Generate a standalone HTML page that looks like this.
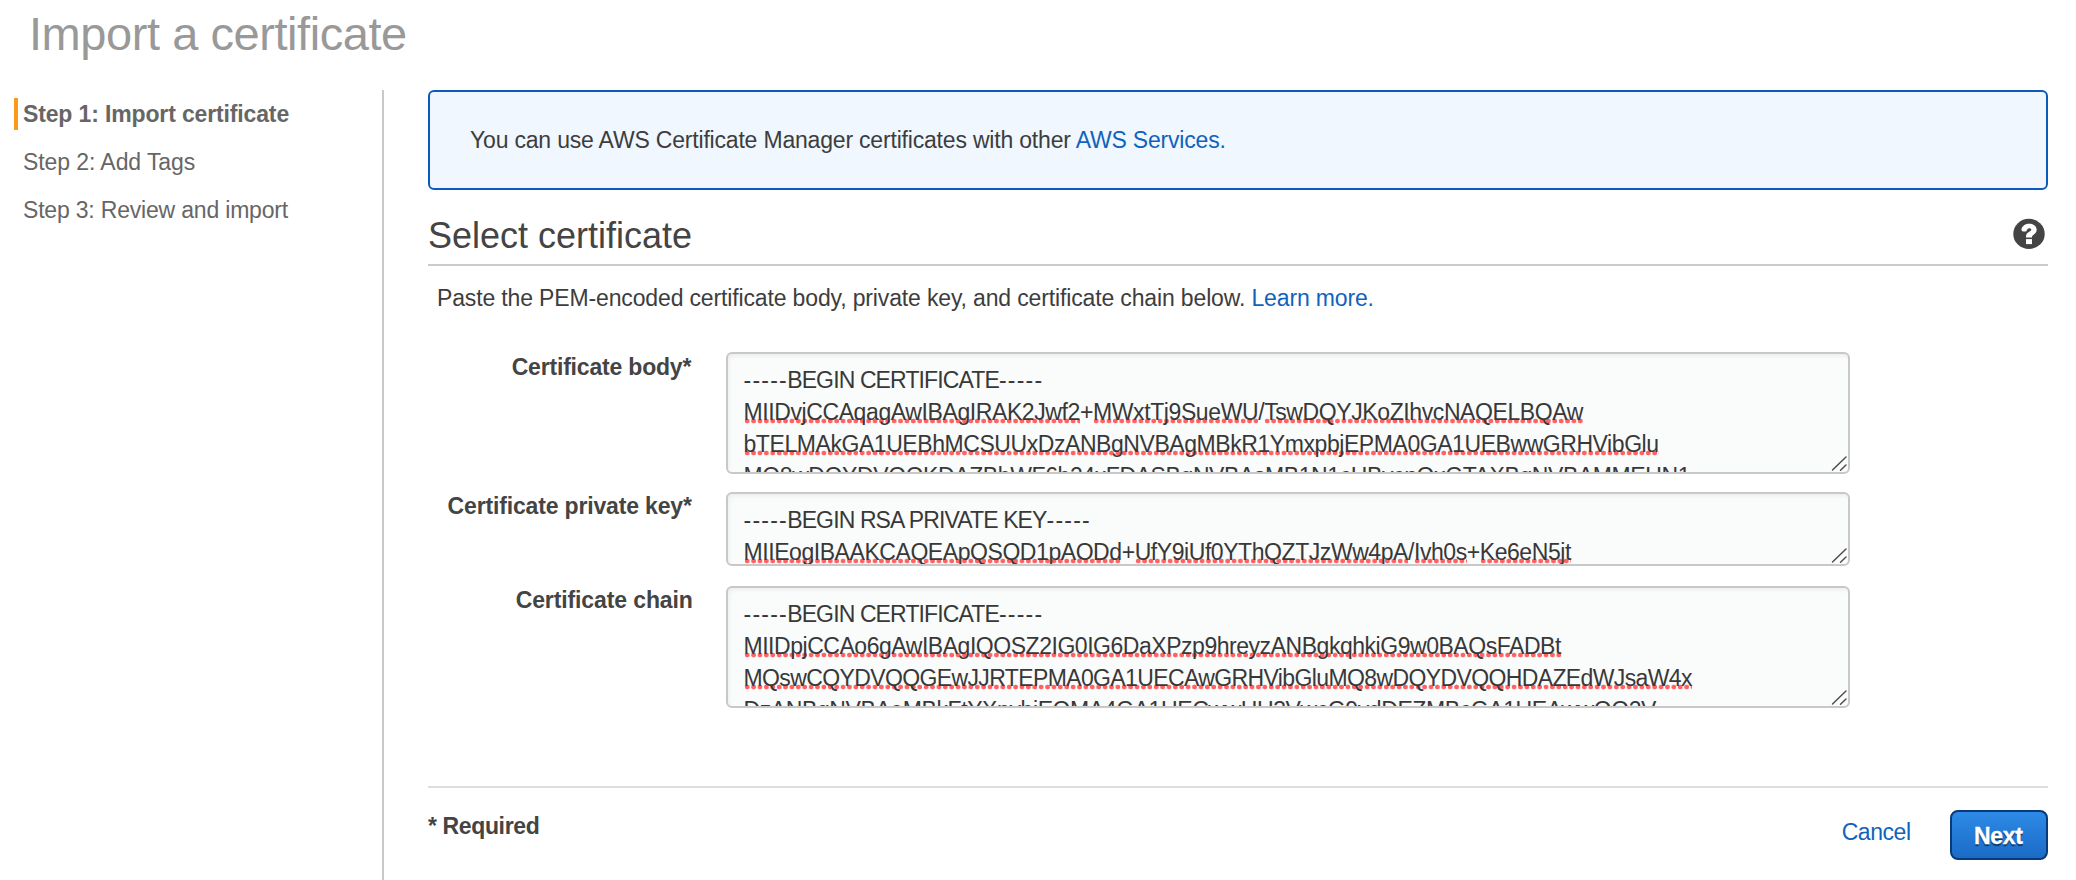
<!DOCTYPE html>
<html><head><meta charset="utf-8">
<style>
html,body{margin:0;padding:0;background:#fff;}
body{width:2076px;height:880px;position:relative;overflow:hidden;font-family:"Liberation Sans",sans-serif;}
.a{position:absolute;white-space:pre;line-height:1;}
.r{font-size:23px;color:#444;}
.b{font-weight:bold;}
.lnk{color:#1063bd;}
.box{position:absolute;box-sizing:border-box;}
.ta{position:absolute;left:726px;width:1124px;box-sizing:border-box;border:2px solid #c8c8c8;border-radius:6px;background:#fafbfb;overflow:hidden;box-shadow:inset 2px 3px 4px -1px rgba(0,0,0,0.06);}
.tl{position:absolute;left:15.5px;white-space:pre;font-size:23px;line-height:1;color:#383838;}
.sp{background-image:radial-gradient(circle at 3.2px calc(100% - 4px),#ff6262 0,#ff6262 2.1px,rgba(255,98,98,0) 2.7px);background-size:6.4px 100%;background-repeat:repeat-x;}
</style></head>
<body>
<div class="a" style="left:29px;top:10px;font-size:47px;color:#999;letter-spacing:-0.44px;">Import a certificate</div>
<div class="box" style="left:14px;top:98px;width:4px;height:32px;background:#fb9a16;"></div>
<div class="a" style="left:23px;top:103px;font-size:23px;color:#666;font-weight:bold;letter-spacing:-0.14px;">Step 1: Import certificate</div>
<div class="a" style="left:23px;top:151px;font-size:23px;color:#666;letter-spacing:-0.08px;">Step 2: Add Tags</div>
<div class="a" style="left:23px;top:199px;font-size:23px;color:#666;letter-spacing:-0.19px;">Step 3: Review and import</div>
<div class="box" style="left:382px;top:90px;width:2px;height:790px;background:#c9c9c9;"></div>
<div class="box" style="left:428px;top:90px;width:1620px;height:100px;border:2px solid #0b5bbd;border-radius:6px;background:#f0f7fe;"></div>
<div class="a" style="left:470px;top:129px;font-size:23px;color:#3d3d3d;letter-spacing:-0.19px;">You can use AWS Certificate Manager certificates with other <span class="lnk">AWS Services.</span></div>
<div class="a" style="left:428px;top:218px;font-size:36px;color:#444;">Select certificate</div>
<svg class="a" style="left:2009px;top:214px;" width="40" height="40" viewBox="2009 214 40 40">
<ellipse cx="2029" cy="233.9" rx="15.7" ry="15.1" fill="#444"/>
<path d="M2021.4 229.3 C2022.4 225.6 2025.6 223.8 2029.3 223.8 C2033.8 223.8 2036.7 226.4 2036.7 229.6 C2036.7 232.6 2034.7 233.9 2033.3 234.9 C2032.3 235.6 2032 236.2 2032 237.6 L2026 237.6 L2026 236.6 C2026 234.4 2027.2 233.2 2028.9 232.1 C2030.6 231 2031.3 230.6 2031.3 229.8 C2031.3 228.8 2030.5 228.2 2029.3 228.2 C2028 228.2 2027.1 229 2026.3 231.3 C2025.2 231.6 2024.2 231.7 2023.2 231.5 C2022.1 231.2 2021.4 230.4 2021.4 229.3 Z" fill="#fff"/>
<rect x="2026" y="239.1" width="6" height="5" fill="#fff"/>
</svg>
<div class="box" style="left:428px;top:264px;width:1620px;height:2px;background:#ccc;"></div>
<div class="a" style="left:437px;top:287px;font-size:23px;color:#3d3d3d;letter-spacing:-0.145px;">Paste the PEM-encoded certificate body, private key, and certificate chain below. <span class="lnk">Learn more.</span></div>
<div class="a" style="left:511.7px;top:356px;font-size:23px;color:#444;font-weight:bold;letter-spacing:-0.19px;">Certificate body*</div>
<div class="a" style="left:447.6px;top:495px;font-size:23px;color:#444;font-weight:bold;letter-spacing:-0.16px;">Certificate private key*</div>
<div class="a" style="left:515.7px;top:589px;font-size:23px;color:#444;font-weight:bold;letter-spacing:-0.11px;">Certificate chain</div>
<div class="ta" style="top:352px;height:122px;">
 <div class="tl" style="top:14.8px;letter-spacing:0px;"><span style="letter-spacing:1.24px;margin-right:-0.8px">-----</span><span style="letter-spacing:-0.88px">BEGIN CERTIFICATE</span><span style="letter-spacing:1.24px">-----</span></div>
 <div class="tl" style="top:46.8px;letter-spacing:-0.4px;"><span class="sp">MIIDvjCCAqagAwIBAgIRAK2Jwf2</span>+<span class="sp">MWxtTj9SueWU</span>/<span class="sp">TswDQYJKoZIhvcNAQELBQAw</span></div>
 <div class="tl" style="top:78.8px;letter-spacing:-0.433px;"><span class="sp">bTELMAkGA1UEBhMCSUUxDzANBgNVBAgMBkR1YmxpbjEPMA0GA1UEBwwGRHVibGlu</span></div>
 <div class="tl" style="top:110.8px;letter-spacing:-0.4px;"><span class="sp">MQ8wDQYDVQQKDAZBbWF6b24xFDASBgNVBAsMB1N1cHBvcnQxGTAXBgNVBAMMEUN1</span></div>
</div>
<div class="ta" style="top:492px;height:74px;">
 <div class="tl" style="top:14.8px;letter-spacing:0px;"><span style="letter-spacing:1.24px;margin-right:-0.8px">-----</span><span style="letter-spacing:-0.88px">BEGIN RSA PRIVATE KEY</span><span style="letter-spacing:1.24px">-----</span></div>
 <div class="tl" style="top:46.8px;letter-spacing:-0.435px;"><span class="sp">MIIEogIBAAKCAQEApQSQD1pAODd</span>+<span class="sp">UfY9iUf0YThQZTJzWw4pA</span>/<span class="sp">Ivh0s</span>+<span class="sp">Ke6eN5jt</span></div>
</div>
<div class="ta" style="top:586px;height:122px;">
 <div class="tl" style="top:14.8px;letter-spacing:0px;"><span style="letter-spacing:1.24px;margin-right:-0.8px">-----</span><span style="letter-spacing:-0.88px">BEGIN CERTIFICATE</span><span style="letter-spacing:1.24px">-----</span></div>
 <div class="tl" style="top:46.8px;letter-spacing:-0.465px;"><span class="sp">MIIDpjCCAo6gAwIBAgIQOSZ2IG0IG6DaXPzp9hreyzANBgkqhkiG9w0BAQsFADBt</span></div>
 <div class="tl" style="top:78.8px;letter-spacing:-0.617px;"><span class="sp">MQswCQYDVQQGEwJJRTEPMA0GA1UECAwGRHVibGluMQ8wDQYDVQQHDAZEdWJsaW4x</span></div>
 <div class="tl" style="top:110.8px;letter-spacing:-0.4px;"><span class="sp">DzANBgNVBAoMBkFtYXpvbjEQMA4GA1UECwwHU3VwcG9ydDEZMBcGA1UEAwwQQ2V</span></div>
</div>
<svg class="a" style="left:1829px;top:455px;" width="18" height="18" viewBox="0 0 18 18"><path d="M3.5 15 L17 2 M11.5 15.2 L17 10" stroke="#4a4a4a" stroke-width="1.4" stroke-linecap="round" fill="none"/></svg>
<svg class="a" style="left:1829px;top:547px;" width="18" height="18" viewBox="0 0 18 18"><path d="M3.5 15 L17 2 M11.5 15.2 L17 10" stroke="#4a4a4a" stroke-width="1.4" stroke-linecap="round" fill="none"/></svg>
<svg class="a" style="left:1829px;top:689px;" width="18" height="18" viewBox="0 0 18 18"><path d="M3.5 15 L17 2 M11.5 15.2 L17 10" stroke="#4a4a4a" stroke-width="1.4" stroke-linecap="round" fill="none"/></svg>
<div class="box" style="left:428px;top:786px;width:1620px;height:2px;background:#ddd;"></div>
<div class="a" style="left:428px;top:815px;font-size:23px;color:#444;font-weight:bold;letter-spacing:-0.37px;">* Required</div>
<div class="a" style="left:1841.7px;top:821px;font-size:23px;color:#444;letter-spacing:-0.44px;"><span class="lnk">Cancel</span></div>
<div class="box" style="left:1950px;top:810px;width:98px;height:50px;border:2px solid #08397a;border-radius:8px;background:linear-gradient(#2d8ae6,#1b6bc6);"></div>
<div class="a" style="left:1974px;top:825px;font-size:23px;color:#fff;font-weight:bold;letter-spacing:-0.3px;text-shadow:0 1.5px 1px #0a3266;-webkit-text-stroke:0.35px #fff;">Next</div>
</body></html>
